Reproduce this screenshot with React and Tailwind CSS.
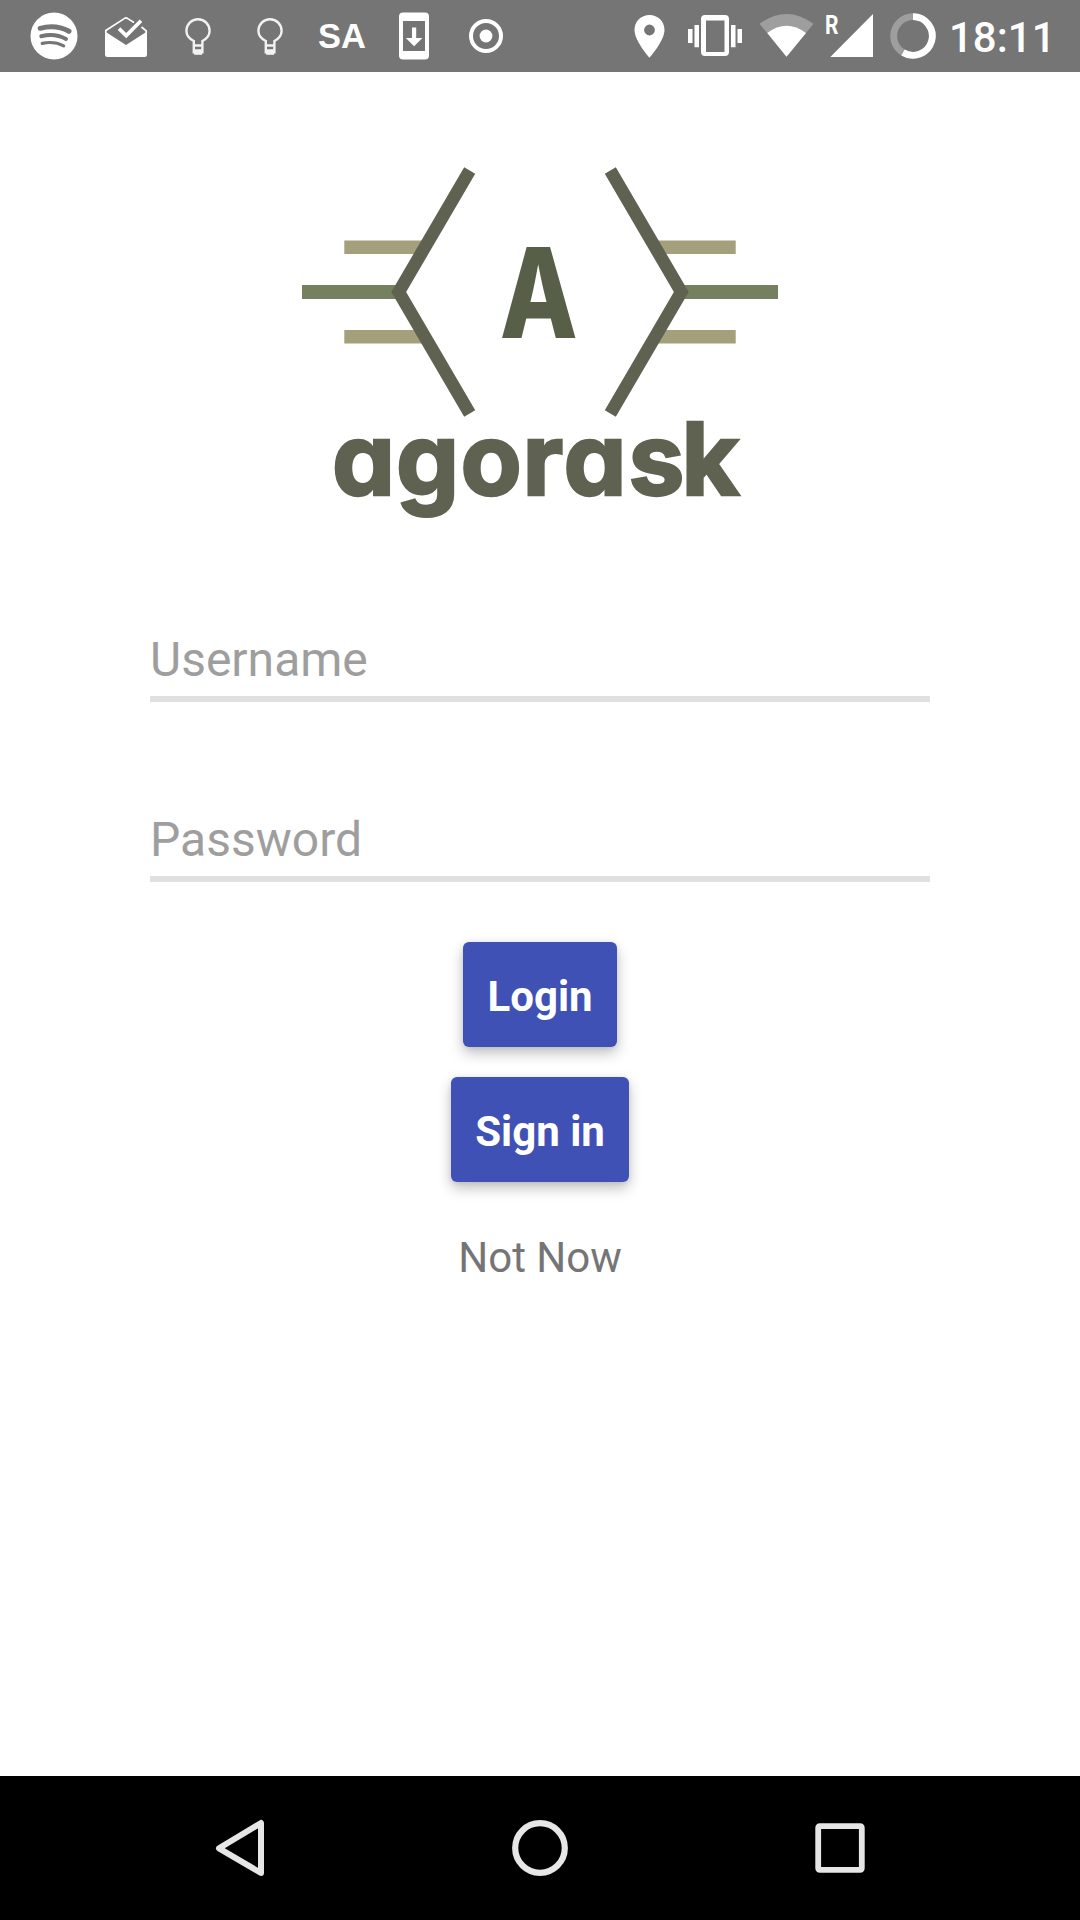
const Icon = ({ x, w = 72, children }) => (
  <svg className="block shrink-0" width={w} height="72" viewBox={`${x} 0 ${w} 72`} fill="none">{children}</svg>
);

const Bulb = ({ x }) => (
  <Icon x={x - 36}>
    <g transform={`translate(${x} 0)`} stroke="#f2f2f2" strokeWidth="2.4">
      <path d="M-4.2 44.5V41C-8.8 38.8-11.6 35-11.6 30.8a11.6 11.6 0 0 1 23.2 0C11.6 35 8.8 38.8 4.4 41V52.2H-4.2Z" />
      <path d="M-4.2 45.5H4.4M-4.2 50.5H4.4" />
      <path d="M-3.8 53.2H4" strokeWidth="3.2" />
    </g>
  </Icon>
);

function StatusBar() {
  return (
    <header className="flex h-[72px] shrink-0 items-center justify-between bg-[#757575] pl-[18px] text-white">
      <div className="flex">
        <Icon x={18}>
          <circle cx="54" cy="36" r="23.5" fill="white" />
          <g stroke="#757575" strokeLinecap="round">
            <path d="M40.2 28.3Q56 24.2 69 31.3" strokeWidth="5" />
            <path d="M41.3 36.2Q55 32.8 66 39" strokeWidth="4" />
            <path d="M42.2 43.4Q54 40.8 63.7 45.8" strokeWidth="3.2" />
          </g>
        </Icon>
        <Icon x={90}>
          <path d="M105 31.5L126 45L147 31.5V54.5Q147 57 144.5 57H107.5Q105 57 105 54.5Z" fill="white" />
          <path d="M105.8 33V30.5L124.2 18.6Q126 17.3 127.8 18.6L134 22.5M141.5 27L146.2 30.8V33" stroke="white" strokeWidth="1.7" />
          <path d="M119 28.6L126.2 35.6L141 20.8" stroke="white" strokeWidth="3.6" />
        </Icon>
        <Bulb x={198} />
        <Bulb x={270} />
        <div className="flex h-[72px] w-[72px] items-center justify-center font-['Liberation_Sans',sans-serif] text-[34.5px] leading-none font-bold">SA</div>
        <Icon x={378}>
          <path fillRule="evenodd" d="M403 12.5H425Q429 12.5 429 16.5V55.5Q429 59.5 425 59.5H403Q399 59.5 399 55.5V16.5Q399 12.5 403 12.5ZM403 21V51H425V21Z" fill="white" />
          <path d="M412 27.5H416.2V38H422.4L414.1 46.3L405.8 38H412Z" fill="white" />
        </Icon>
        <Icon x={450}>
          <circle cx="486" cy="36" r="15" stroke="white" strokeWidth="4" />
          <circle cx="486" cy="36" r="6.4" fill="white" />
        </Icon>
      </div>
      <div className="flex w-[458px] items-center">
        <Icon x={622} w={57}>
          <path fillRule="evenodd" d="M649.5 15C641 15 634.5 21.5 634.5 30C634.5 41 649.5 57.7 649.5 57.7S664.5 41 664.5 30C664.5 21.5 658 15 649.5 15ZM649.5 24.6A5.4 5.4 0 1 1 649.5 35.4A5.4 5.4 0 1 1 649.5 24.6Z" fill="white" />
        </Icon>
        <Icon x={679}>
          <path fillRule="evenodd" d="M705 15H725Q729 15 729 19V52Q729 56 725 56H705Q701 56 701 52V19Q701 15 705 15ZM706 20.5V52H724.5V20.5Z" fill="white" />
          <path d="M688 29h4.5v14H688ZM694.5 25h4.5v22.3h-4.5ZM731 25h4.5v22.3H731ZM737.5 29h4.5v14h-4.5Z" fill="white" />
        </Icon>
        <Icon x={751} w={71}>
          <path d="M759.5 23.7Q786.5 4.3 813.5 23.7L786.5 56.8Z" fill="white" fillOpacity="0.3" />
          <path d="M767.3 33Q786.5 18.6 806 33L786.5 56.8Z" fill="white" />
        </Icon>
        <Icon x={822} w={57}>
          <text x="825" y="33.5" fill="white" fontSize="25.5" fontWeight="700" textLength="13.5" lengthAdjust="spacingAndGlyphs" className="font-[Roboto,sans-serif]">R</text>
          <path d="M873 14V57H830.3Z" fill="white" />
        </Icon>
        <Icon x={879} w={67}>
          <circle cx="913" cy="36" r="19.3" stroke="white" strokeOpacity="0.3" strokeWidth="6.8" />
          <path d="M913 16.7A19.3 19.3 0 1 1 903 52.5" stroke="white" strokeWidth="6.8" />
        </Icon>
        <span className="ml-[3px] pt-[3px] text-[42px] leading-[69px] font-medium">18:11</span>
      </div>
    </header>
  );
}

function Logo() {
  return (
    <svg className="mt-[95px] block overflow-visible" width="476" height="350" viewBox="302 167 476 350" fill="none" role="img" aria-label="agorask">
      <path d="M344.3 247.3H425M655 247.3H735.7M344.3 336.8H425M655 336.8H735.7" stroke="#a5a07c" strokeWidth="13.6" />
      <path d="M302 292H400M680 292H778" stroke="#748060" strokeWidth="13.8" />
      <path d="M469.7 170.5L398.7 292L469.7 413.5M610.3 170.5L681.3 292L610.3 413.5" stroke="#5f6250" strokeWidth="12.8" />
      <text x="538.7" y="338" textAnchor="middle" fill="#575f49" fontSize="125" fontWeight="800" textLength="78" lengthAdjust="spacingAndGlyphs" className="font-[Inter,sans-serif]">A</text>
      <text x="332 396 460.5 522.5 563.5 628.5 681.5" y="494.5" fill="#5f6250" stroke="#5f6250" strokeWidth="2.5" fontSize="100" fontWeight="700" className="font-[Inter,sans-serif] [font-feature-settings:'cv11']">agorask</text>
    </svg>
  );
}

const field = "block w-[780px] h-[90px] border-b-6 border-[#e0e0e0] bg-transparent pt-[13px] pb-[3px] text-[48px] leading-[64px] placeholder:text-[#9e9e9e] placeholder:opacity-100 outline-none";
const button = "block h-[105px] rounded-[6px] bg-[#3f51b5] px-6 pt-[5px] text-[42px] leading-[100px] font-bold text-white shadow-[0_6px_14px_rgba(0,0,0,0.25),0_1px_5px_rgba(0,0,0,0.08)]";

export default function App() {
  return (
    <div className="flex h-[1920px] w-[1080px] flex-col overflow-hidden bg-white font-[Roboto,sans-serif]">
      <StatusBar />
      <main className="flex flex-1 flex-col items-center">
        <Logo />
        <input className={`${field} mt-[95px]`} placeholder="Username" />
        <input className={`${field} mt-[90px]`} type="password" placeholder="Password" />
        <button className={`${button} mt-[60px]`}>Login</button>
        <button className={`${button} mt-[30px]`}>Sign in</button>
        <button className="mt-[51px] text-[42px] leading-[50px] text-[#757575]">Not Now</button>
      </main>
      <nav className="flex h-[144px] shrink-0 items-center justify-center gap-[228px] bg-black">
        <svg width="72" height="72" viewBox="204 1812 72 72" fill="none" stroke="#e6e6e6" strokeWidth="6" strokeLinejoin="round">
          <path d="M261 1823V1873L219 1848.3Z" />
        </svg>
        <svg width="72" height="72" viewBox="504 1812 72 72" fill="none">
          <circle cx="540" cy="1848" r="24.8" stroke="#e6e6e6" strokeWidth="6.2" />
        </svg>
        <svg width="72" height="72" viewBox="804 1812 72 72" fill="none">
          <rect x="818.2" y="1826.2" width="43.6" height="43.6" rx="1.5" stroke="#e6e6e6" strokeWidth="5.8" />
        </svg>
      </nav>
    </div>
  );
}
